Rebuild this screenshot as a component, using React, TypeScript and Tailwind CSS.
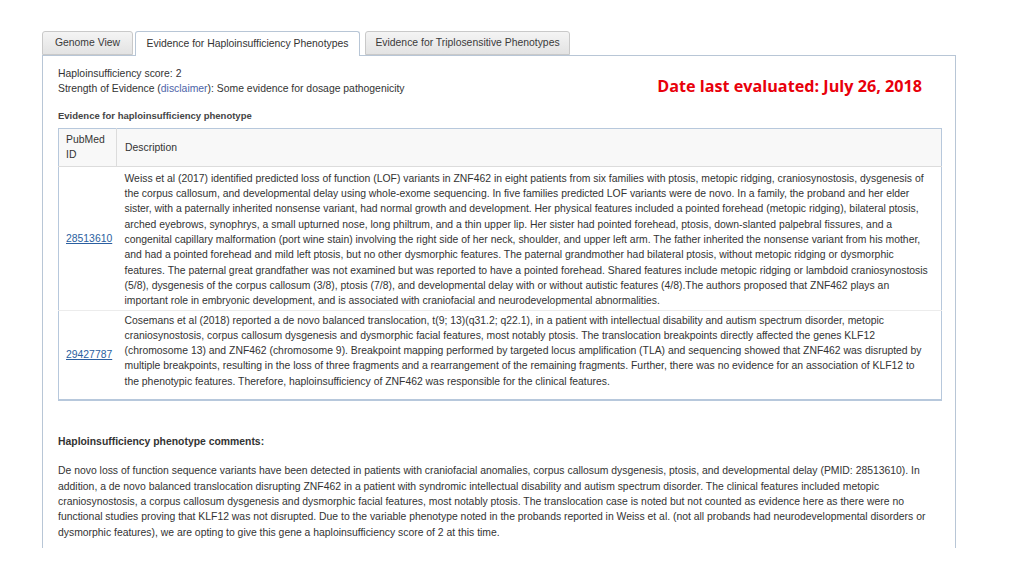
const row1 = [
  "Weiss et al (2017) identified predicted loss of function (LOF) variants in ZNF462 in eight patients from six families with ptosis, metopic ridging, craniosynostosis, dysgenesis of",
  "the corpus callosum, and developmental delay using whole-exome sequencing. In five families predicted LOF variants were de novo. In a family, the proband and her elder",
  "sister, with a paternally inherited nonsense variant, had normal growth and development. Her physical features included a pointed forehead (metopic ridging), bilateral ptosis,",
  "arched eyebrows, synophrys, a small upturned nose, long philtrum, and a thin upper lip. Her sister had pointed forehead, ptosis, down-slanted palpebral fissures, and a",
  "congenital capillary malformation (port wine stain) involving the right side of her neck, shoulder, and upper left arm. The father inherited the nonsense variant from his mother,",
  "and had a pointed forehead and mild left ptosis, but no other dysmorphic features. The paternal grandmother had bilateral ptosis, without metopic ridging or dysmorphic",
  "features. The paternal great grandfather was not examined but was reported to have a pointed forehead. Shared features include metopic ridging or lambdoid craniosynostosis",
  "(5/8), dysgenesis of the corpus callosum (3/8), ptosis (7/8), and developmental delay with or without autistic features (4/8).The authors proposed that ZNF462 plays an",
  "important role in embryonic development, and is associated with craniofacial and neurodevelopmental abnormalities.",
];

const row2 = [
  "Cosemans et al (2018) reported a de novo balanced translocation, t(9; 13)(q31.2; q22.1), in a patient with intellectual disability and autism spectrum disorder, metopic",
  "craniosynostosis, corpus callosum dysgenesis and dysmorphic facial features, most notably ptosis. The translocation breakpoints directly affected the genes KLF12",
  "(chromosome 13) and ZNF462 (chromosome 9). Breakpoint mapping performed by targeted locus amplification (TLA) and sequencing showed that ZNF462 was disrupted by",
  "multiple breakpoints, resulting in the loss of three fragments and a rearrangement of the remaining fragments. Further, there was no evidence for an association of KLF12 to",
  "the phenotypic features. Therefore, haploinsufficiency of ZNF462 was responsible for the clinical features.",
];

const comments = [
  "De novo loss of function sequence variants have been detected in patients with craniofacial anomalies, corpus callosum dysgenesis, ptosis, and developmental delay (PMID: 28513610). In",
  "addition, a de novo balanced translocation disrupting ZNF462 in a patient with syndromic intellectual disability and autism spectrum disorder. The clinical features included metopic",
  "craniosynostosis, a corpus callosum dysgenesis and dysmorphic facial features, most notably ptosis. The translocation case is noted but not counted as evidence here as there were no",
  "functional studies proving that KLF12 was not disrupted. Due to the variable phenotype noted in the probands reported in Weiss et al. (not all probands had neurodevelopmental disorders or",
  "dysmorphic features), we are opting to give this gene a haploinsufficiency score of 2 at this time.",
];

function Lines({ lines }: { lines: string[] }) {
  return (
    <>
      {lines.map((l, i) => (
        <div key={i} className="whitespace-nowrap">
          {l}
        </div>
      ))}
    </>
  );
}

export default function App() {
  return (
    <div className="w-[1024px] h-[576px] overflow-hidden bg-white pt-[31px] pl-[42px] text-[#333] font-['Liberation_Sans',Arial,sans-serif] text-[10.4px] leading-[15.3px]">
      {/* Tabs */}
      <div className="flex items-end gap-[2px] relative z-10">
        <div className="w-[91px] h-[24px] flex items-center justify-center rounded-t-[3px] border border-[#c9c9c9] bg-linear-to-b from-[#f4f4f4] to-[#e3e3e3] text-[#3a3a3a]">
          Genome View
        </div>
        <div className="w-[225px] h-[25px] -mb-px flex items-center justify-center rounded-t-[3px] border border-b-0 border-[#b8c6d6] bg-white">
          Evidence for Haploinsufficiency Phenotypes
        </div>
        <div className="ml-[3px] w-[205px] h-[24px] flex items-center justify-center rounded-t-[3px] border border-[#c9c9c9] bg-linear-to-b from-[#f4f4f4] to-[#e3e3e3] text-[#3a3a3a]">
          Evidence for Triplosensitive Phenotypes
        </div>
      </div>

      {/* Panel */}
      <div className="w-[914px] h-[493px] border border-b-0 border-[#b8c6d6] px-[15px] pt-[10px]">
        <div className="flex items-end justify-between pr-[18px]">
          <div>
            <div>Haploinsufficiency score: 2</div>
            <div>
              Strength of Evidence (<span className="text-[#4d64a8]">disclaimer</span>): Some evidence for dosage pathogenicity
            </div>
          </div>
          <div className="font-['Open_Sans',sans-serif] font-bold text-[16.2px] leading-[20px] text-[#e8000b] mb-[1px]">
            Date last evaluated: July 26, 2018
          </div>
        </div>

        <div className="mt-[11px] font-bold text-[9.5px] text-[#444]">
          Evidence for haploinsufficiency phenotype
        </div>

        <table className="mt-[5px] w-[884px] table-fixed border-collapse border border-[#b7c8dc] shadow-[0_1px_0_#b7c8dc]">
          <colgroup>
            <col className="w-[58px]" />
            <col />
          </colgroup>
          <thead>
            <tr className="bg-[#f8f8f8] border-b border-[#dcdcdc]">
              <th className="h-[38px] px-[7px] text-left font-normal border-r border-[#dcdcdc] leading-[15px]">
                PubMed
                <br />
                ID
              </th>
              <th className="px-[8px] text-left font-normal">Description</th>
            </tr>
          </thead>
          <tbody>
            <tr className="border-b border-[#ececec]">
              <td className="px-[7px] align-middle">
                <span className="underline text-[#2b5fa0]">28513610</span>
              </td>
              <td className="px-[8px] pt-[4px] pb-[1px]">
                <Lines lines={row1} />
              </td>
            </tr>
            <tr>
              <td className="px-[7px] align-middle">
                <span className="underline text-[#2b5fa0]">29427787</span>
              </td>
              <td className="px-[8px] pt-[2px] pb-[10px]">
                <Lines lines={row2} />
              </td>
            </tr>
          </tbody>
        </table>

        <div className="mt-[34px] font-bold text-[#333]">Haploinsufficiency phenotype comments:</div>
        <div className="mt-[14px]">
          <Lines lines={comments} />
        </div>
      </div>
    </div>
  );
}
